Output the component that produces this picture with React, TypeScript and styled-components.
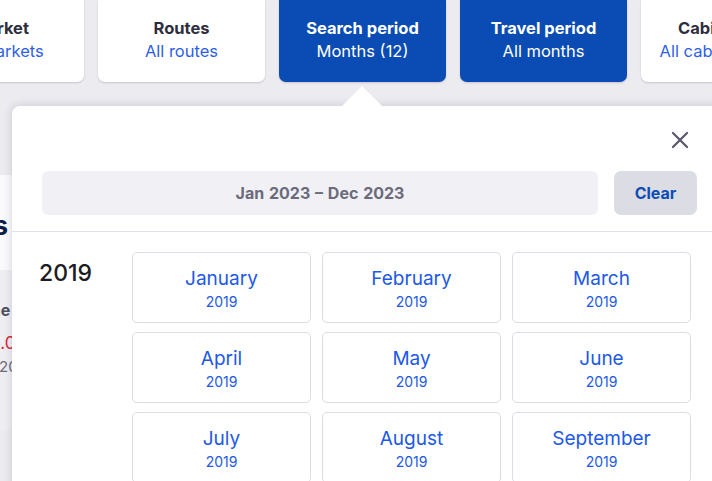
import React from 'react';
import styled, { createGlobalStyle } from 'styled-components';
import { X } from 'lucide-react';

const GlobalStyle = createGlobalStyle`
  * { box-sizing: border-box; }
  body {
    margin: 0;
    font-family: Inter, "Noto Sans", Arial, sans-serif;
    background: #ebebf0;
  }
`;

const Page = styled.div`
  position: relative;
  width: 712px;
  height: 481px;
  overflow: hidden;
  background: #ebebf0;
`;

const TileRow = styled.div`
  display: flex;
  gap: 14px;
  margin-left: -83px;
`;

const Tile = styled.div<{ $active?: boolean }>`
  flex: 0 0 167px;
  height: 82px;
  padding-top: 18px;
  border-radius: 0 0 7px 7px;
  background: ${({ $active }) => ($active ? '#0a4cb3' : '#ffffff')};
  box-shadow: 0 1px 2px rgba(30, 30, 60, 0.18);
  display: flex;
  flex-direction: column;
  align-items: center;
  gap: 3px;
  white-space: nowrap;
`;

const TileTitle = styled.div<{ $active?: boolean }>`
  font-size: 16.5px;
  line-height: 20px;
  font-weight: 700;
  color: ${({ $active }) => ($active ? '#ffffff' : '#2e2e3d')};
`;

const TileValue = styled.div<{ $active?: boolean }>`
  font-size: 16.5px;
  line-height: 20px;
  color: ${({ $active }) => ($active ? '#ffffff' : '#2f5fe6')};
`;

const Backdrop = styled.div`
  width: 200px;
  margin-left: -188px;
  margin-top: 93px;
  display: flex;
  flex-direction: column;
`;

const Section = styled.div`
  height: 95px;
  background: #fafafc;
  display: flex;
  align-items: center;
  justify-content: flex-end;
  padding: 6px 4px 0 0;
`;

const SectionTitle = styled.div`
  font-size: 26px;
  font-weight: 700;
  color: #101c48;
  white-space: nowrap;
`;

const FareCard = styled.div`
  height: 160px;
  background: #eeeef3;
  padding-top: 29px;
  display: flex;
  flex-direction: column;
  white-space: nowrap;
`;

const FareLine = styled.div<{ $indent: number }>`
  margin-left: ${({ $indent }) => $indent}px;
`;

const FareLabel = styled(FareLine)`
  font-size: 16px;
  line-height: 22px;
  font-weight: 700;
  color: #50505f;
  margin-bottom: 11px;
`;

const FarePrice = styled(FareLine)`
  font-size: 17px;
  line-height: 22px;
  color: #d8283a;
  margin-bottom: 3px;
`;

const FareDate = styled(FareLine)`
  font-size: 15px;
  line-height: 20px;
  color: #6b6b7b;
`;

const Popover = styled.div`
  position: absolute;
  top: 106px;
  left: 12px;
  width: 715px;
  bottom: -20px;
  background: #ffffff;
  border-radius: 8px;
  box-shadow: 0 0 10px rgba(40, 40, 70, 0.18);
`;

const Arrow = styled.div`
  position: absolute;
  top: -20px;
  left: 330px;
  width: 0;
  height: 0;
  border-left: 20px solid transparent;
  border-right: 20px solid transparent;
  border-bottom: 20px solid #ffffff;
`;

const CloseRow = styled.div`
  display: flex;
  justify-content: flex-end;
  padding: 20px 33px 0 0;
  height: 65px;
`;

const CloseButton = styled.button`
  border: none;
  background: none;
  padding: 0;
  width: 28px;
  height: 28px;
  color: #5c5c6e;
  display: flex;
  align-items: center;
  justify-content: center;
`;

const SearchRow = styled.div`
  display: flex;
  gap: 16px;
  padding: 0 30px 16px 30px;
  border-bottom: 1px solid #e1e1e8;
`;

const RangeField = styled.div`
  flex: 1;
  height: 44px;
  border-radius: 6px;
  background: #f0f0f5;
  display: flex;
  align-items: center;
  justify-content: center;
  font-size: 16px;
  font-weight: 700;
  color: #6b6b7b;
  word-spacing: 1px;
`;

const ClearButton = styled.button`
  width: 83px;
  height: 44px;
  border: none;
  border-radius: 7px;
  background: #dcdce4;
  font-family: inherit;
  font-size: 16px;
  font-weight: 700;
  color: #0b4db5;
`;

const YearBlock = styled.div`
  display: flex;
  padding: 20px 0 0 27px;
`;

const YearLabel = styled.div`
  width: 93px;
  font-size: 23px;
  line-height: 42px;
  font-weight: 500;
  color: #1c1c22;
`;

const MonthGrid = styled.div`
  display: grid;
  grid-template-columns: repeat(3, 179px);
  column-gap: 11px;
  row-gap: 9px;
`;

const MonthCard = styled.div`
  height: 71px;
  border: 1px solid #dcdce6;
  border-radius: 5px;
  padding-top: 13px;
  display: flex;
  flex-direction: column;
  align-items: center;
  color: #2158e6;
`;

const MonthName = styled.div`
  font-size: 19px;
  line-height: 26px;
`;

const MonthYear = styled.div`
  font-size: 14px;
  line-height: 20px;
`;

const tiles = [
  { title: 'Market', value: 'All markets' },
  { title: 'Routes', value: 'All routes' },
  { title: 'Search period', value: 'Months (12)', active: true },
  { title: 'Travel period', value: 'All months', active: true },
  { title: 'Cabin class', value: 'All cabin classes' },
];

const months = [
  'January', 'February', 'March',
  'April', 'May', 'June',
  'July', 'August', 'September',
];

export default function App() {
  return (
    <Page>
      <GlobalStyle />
      <TileRow>
        {tiles.map((t) => (
          <Tile key={t.title} $active={t.active}>
            <TileTitle $active={t.active}>{t.title}</TileTitle>
            <TileValue $active={t.active}>{t.value}</TileValue>
          </Tile>
        ))}
      </TileRow>

      <Backdrop>
        <Section>
          <SectionTitle>Top routes</SectionTitle>
        </Section>
        <FareCard>
          <FareLabel $indent={147}>Airline</FareLabel>
          <FarePrice $indent={170}>€1.020</FarePrice>
          <FareDate $indent={187}>2023</FareDate>
        </FareCard>
      </Backdrop>

      <Popover>
        <Arrow />
        <CloseRow>
          <CloseButton aria-label="Close">
            <X size={28} strokeWidth={2} />
          </CloseButton>
        </CloseRow>
        <SearchRow>
          <RangeField>Jan 2023 – Dec 2023</RangeField>
          <ClearButton>Clear</ClearButton>
        </SearchRow>
        <YearBlock>
          <YearLabel>2019</YearLabel>
          <MonthGrid>
            {months.map((m) => (
              <MonthCard key={m}>
                <MonthName>{m}</MonthName>
                <MonthYear>2019</MonthYear>
              </MonthCard>
            ))}
          </MonthGrid>
        </YearBlock>
      </Popover>
    </Page>
  );
}
